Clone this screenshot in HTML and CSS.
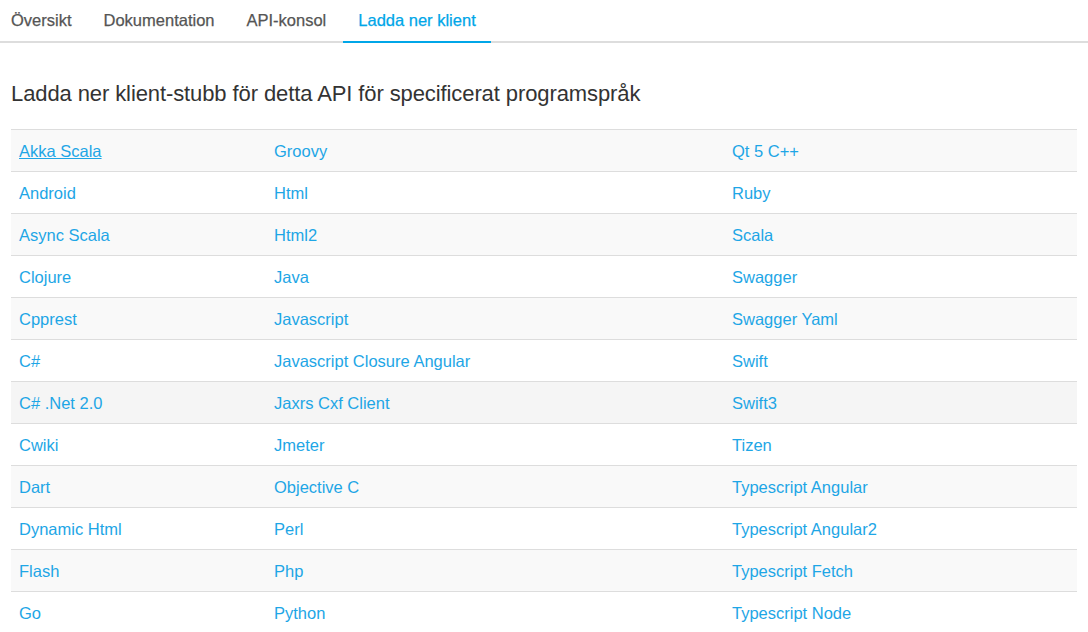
FILE: index.html
```html
<!DOCTYPE html>
<html lang="sv">
<head>
<meta charset="utf-8">
<title>Ladda ner klient</title>
<link rel="stylesheet" href="styles.css">
</head>
<body>
<nav class="tabs">
  <a class="tab first" href="#">Översikt</a>
  <a class="tab" href="#">Dokumentation</a>
  <a class="tab" href="#">API-konsol</a>
  <a class="tab active" href="#">Ladda ner klient</a>
</nav>
<main class="content">
  <h1 class="title">Ladda ner klient-stubb för detta API för specificerat programspråk</h1>
  <table class="clients">
    <tbody>
      <tr><td><a class="u" href="#">Akka Scala</a></td><td><a href="#">Groovy</a></td><td><a href="#">Qt 5 C++</a></td></tr>
      <tr><td><a href="#">Android</a></td><td><a href="#">Html</a></td><td><a href="#">Ruby</a></td></tr>
      <tr><td><a href="#">Async Scala</a></td><td><a href="#">Html2</a></td><td><a href="#">Scala</a></td></tr>
      <tr><td><a href="#">Clojure</a></td><td><a href="#">Java</a></td><td><a href="#">Swagger</a></td></tr>
      <tr><td><a href="#">Cpprest</a></td><td><a href="#">Javascript</a></td><td><a href="#">Swagger Yaml</a></td></tr>
      <tr><td><a href="#">C#</a></td><td><a href="#">Javascript Closure Angular</a></td><td><a href="#">Swift</a></td></tr>
      <tr class="hover"><td><a href="#">C# .Net 2.0</a></td><td><a href="#">Jaxrs Cxf Client</a></td><td><a href="#">Swift3</a></td></tr>
      <tr><td><a href="#">Cwiki</a></td><td><a href="#">Jmeter</a></td><td><a href="#">Tizen</a></td></tr>
      <tr><td><a href="#">Dart</a></td><td><a href="#">Objective C</a></td><td><a href="#">Typescript Angular</a></td></tr>
      <tr><td><a href="#">Dynamic Html</a></td><td><a href="#">Perl</a></td><td><a href="#">Typescript Angular2</a></td></tr>
      <tr><td><a href="#">Flash</a></td><td><a href="#">Php</a></td><td><a href="#">Typescript Fetch</a></td></tr>
      <tr><td><a href="#">Go</a></td><td><a href="#">Python</a></td><td><a href="#">Typescript Node</a></td></tr>
    </tbody>
  </table>
</main>
</body>
</html>
```
FILE: styles.css
```css
* { box-sizing: border-box; }
html, body { margin: 0; padding: 0; background: #fff; }
body {
  font-family: "Liberation Sans", Arial, sans-serif;
  font-size: 15px;
  color: #333;
}
.tabs {
  display: flex;
  gap: 2px;
  border-bottom: 2px solid #ddd;
  height: 43px;
  padding-left: 0;
}
.tab {
  display: block;
  padding: 10px 15px 0 15px;
  height: 43px;
  margin-bottom: -2px;
  color: #555;
  text-decoration: none;
  font-size: 16.5px;
  line-height: 20px;
  -webkit-text-stroke: 0.25px #555;
  border-bottom: 2px solid transparent;
}
.tab.first { padding-left: 11px; }
.tab.active {
  color: #00a6e8;
  -webkit-text-stroke: 0.25px #00a6e8;
  border-bottom-color: #00a6e8;
}
.content { padding: 0 11px 0 11px; }
.title {
  font-weight: normal;
  font-size: 22px;
  line-height: 26px;
  letter-spacing: -0.1px;
  margin: 38px 0 0 0;
  color: #333;
}
.clients {
  width: 100%;
  border-collapse: collapse;
  margin-top: 22px;
}
.clients td {
  border-top: 1px solid #ddd;
  padding: 11px 8px 9px 8px;
  line-height: 21px;
  font-size: 16.5px;
  vertical-align: top;
}
.clients td:nth-child(1) { width: 255px; }
.clients td:nth-child(2) { width: 458px; }
.clients tr:nth-child(odd) { background: #f9f9f9; }
.clients tr.hover { background: #f5f5f5; }
.clients a { color: #1ea6e6; text-decoration: none; }
.clients a.u { text-decoration: underline; }
```
